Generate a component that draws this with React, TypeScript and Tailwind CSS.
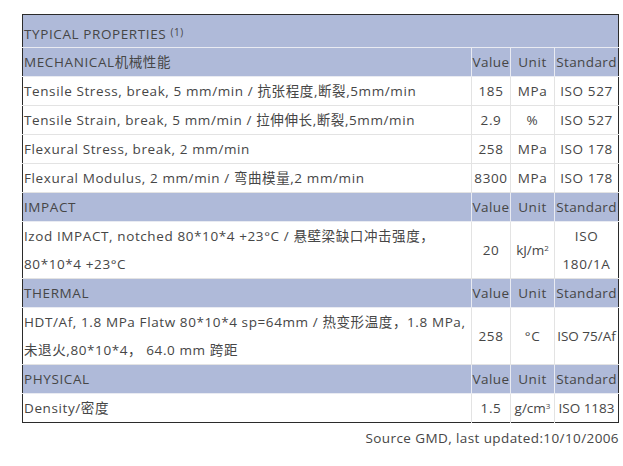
import React from "react";

const hdr = "bg-[#afbad9]";
const font = { fontFamily: '"Open Sans", "Noto Sans CJK SC", sans-serif' };

function HeadRow({ label }: { label: string }) {
  return (
    <tr className={hdr}>
      <td className="border-b border-[#e9ebf2] pl-px">{label}</td>
      <td className="border-b border-l border-[#e9ebf2] text-center tracking-[0.4px]">Value</td>
      <td className="border-b border-l border-[#e9ebf2] text-center">Unit</td>
      <td className="border-b border-l border-[#e9ebf2] text-center tracking-[0.4px]">Standard</td>
    </tr>
  );
}

function DataRow({ label, value, unit, std, last }: { label: React.ReactNode; value: string; unit: React.ReactNode; std: React.ReactNode; last?: boolean }) {
  const b = last ? "" : "border-b border-[#e3e3e3]";
  return (
    <tr className="bg-white">
      <td className={`${b} pl-px whitespace-nowrap`}>{label}</td>
      <td className={`${b} border-l border-[#e3e3e3] text-center`}>{value}</td>
      <td className={`${b} border-l border-[#e3e3e3] text-center`}>{unit}</td>
      <td className={`${b} border-l border-[#e3e3e3] text-center`}>{std}</td>
    </tr>
  );
}

export default function App() {
  return (
    <div className="w-[623px] h-[466px] bg-white pt-[14px] pl-[22px] text-[#464646]" style={font}>
      <table className="w-[596px] border border-[#2b2b2b] border-collapse table-fixed text-[13.5px] tracking-[0.6px] leading-[28px]">
        <colgroup>
          <col className="w-[449px]" />
          <col className="w-[39px]" />
          <col className="w-[44px]" />
          <col className="w-[64px]" />
        </colgroup>
        <tbody>
          <tr className={hdr}>
            <td colSpan={4} className="border-b border-[#e9ebf2] pl-px h-[33px] pt-[6px] leading-[26px]">
              TYPICAL PROPERTIES <sup className="text-[10px] relative -top-[3px]">(1)</sup>
            </td>
          </tr>
          <HeadRow label="MECHANICAL机械性能" />
          <DataRow label="Tensile Stress, break, 5 mm/min / 抗张程度,断裂,5mm/min" value="185" unit="MPa" std="ISO 527" />
          <DataRow label="Tensile Strain, break, 5 mm/min / 拉伸伸长,断裂,5mm/min" value="2.9" unit="%" std="ISO 527" />
          <DataRow label="Flexural Stress, break, 2 mm/min" value="258" unit="MPa" std="ISO 178" />
          <DataRow label="Flexural Modulus, 2 mm/min / 弯曲模量,2 mm/min" value="8300" unit="MPa" std="ISO 178" />
          <HeadRow label="IMPACT" />
          <DataRow
            label={<>Izod IMPACT, notched 80*10*4 +23°C / 悬壁梁缺口冲击强度，<br />80*10*4 +23°C</>}
            value="20"
            unit={<span className="whitespace-nowrap tracking-normal">kJ/m<sup className="text-[8px]">2</sup></span>}
            std={<>ISO<br />180/1A</>}
          />
          <HeadRow label="THERMAL" />
          <DataRow
            label={<>HDT/Af, 1.8 MPa Flatw 80*10*4 sp=64mm / 热变形温度，1.8 MPa,<br />未退火,80*10*4， 64.0 mm 跨距</>}
            value="258"
            unit="°C"
            std={<span className="whitespace-nowrap tracking-normal">ISO 75/Af</span>}
          />
          <HeadRow label="PHYSICAL" />
          <DataRow
            label="Density/密度"
            value="1.5"
            unit={<span className="whitespace-nowrap tracking-normal">g/cm<sup className="text-[8px]">3</sup></span>}
            std={<span className="whitespace-nowrap tracking-normal">ISO 1183</span>}
            last
          />
        </tbody>
      </table>
      <div className="w-[597px] text-right text-[13.5px] tracking-[0.4px] leading-[28px] mt-[1px]">Source GMD, last updated:10/10/2006</div>
    </div>
  );
}
